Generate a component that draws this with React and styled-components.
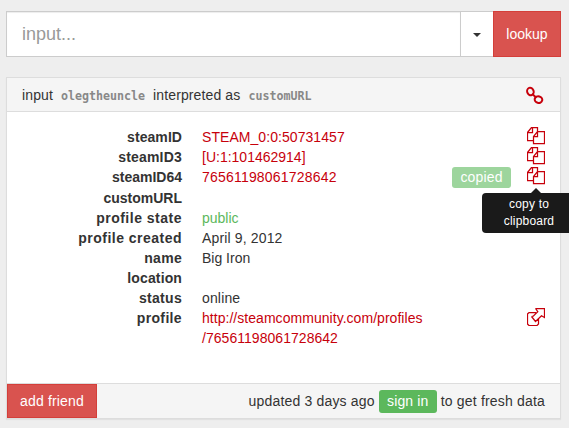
import React from "react";
import styled, { createGlobalStyle } from "styled-components";

const Global = createGlobalStyle`
  * { box-sizing: border-box; }
  html, body { margin: 0; height: 100%; overflow: hidden; background: #eeeeee; }
  body { font: 14px/20px "Liberation Sans", Arial, sans-serif; color: #333; }
`;

const Page = styled.main`
  width: 569px;
  height: 428px;
  padding: 11px 8px 0 6px;
  overflow: hidden;
`;

const SearchBar = styled.form`
  display: flex;
  height: 46px;
  margin: 0 0 20px;
`;

const SearchInput = styled.input`
  width: 455px;
  height: 46px;
  padding: 10px 15px;
  border: 1px solid #ccc;
  border-radius: 0;
  background: #fff;
  box-shadow: inset 0 1px 1px rgba(0, 0, 0, 0.075);
  font: 18px/24px "Liberation Sans", Arial, sans-serif;
  outline: none;
  &::placeholder { color: #999; opacity: 1; }
`;

const MenuButton = styled.button`
  display: flex;
  align-items: center;
  justify-content: center;
  width: 32px;
  padding: 2px 0 0;
  border: 1px solid #ccc;
  border-width: 1px 0;
  background: #fff;
`;

const Caret = styled.span`
  border: 4px solid transparent;
  border-top-color: #333;
  border-bottom: 0;
`;

const RedButton = styled.button`
  width: ${(p) => p.$width}px;
  height: ${(p) => p.$height}px;
  padding: 0;
  border: 1px solid #d43f3a;
  background: #d9534f;
  color: #fff;
  font: 14px/20px "Liberation Sans", Arial, sans-serif;
  letter-spacing: ${(p) => p.$spacing || 0}px;
`;

const Panel = styled.section`
  height: 342px;
  border: 1px solid #ddd;
  background: #fff;
  box-shadow: 0 1px 1px rgba(0, 0, 0, 0.05);
`;

const PanelHeader = styled.header`
  display: flex;
  align-items: center;
  justify-content: space-between;
  height: 34px;
  padding: 1px 16px 0 15px;
  border-bottom: 1px solid #ddd;
  background: #f5f5f5;
`;

const Heading = styled.span`
  padding-top: 1px;
  letter-spacing: 0.12px;
`;

const Code = styled.code`
  margin: 0 4px 0 4px;
  font: bold 11.65px/20px "DejaVu Sans Mono", monospace;
  letter-spacing: 0;
  color: #888;
`;

const Details = styled.dl`
  height: 271px;
  margin: 0;
  padding: 15.3px 15px 0 0;
`;

const Row = styled.div`
  display: grid;
  grid-template-columns: 175px 1fr auto;
  column-gap: 20px;
  min-height: 20.08px;
  line-height: 20.08px;
`;

const Label = styled.dt`
  font-weight: bold;
  text-align: right;
  letter-spacing: ${(p) => p.$spacing || 0}px;
`;

const Value = styled.dd`
  margin: 0;
  color: ${(p) => p.$color || "#333"};
  letter-spacing: ${(p) => p.$spacing || 0}px;
`;

const Actions = styled.div`
  display: flex;
  align-items: flex-start;
  gap: 16px;
  position: relative;
  height: 20px;
`;

const Badge = styled.span`
  width: ${(p) => p.$width}px;
  height: ${(p) => p.$height}px;
  text-align: center;
  border-radius: 3px;
  background: ${(p) => (p.$faded ? "#9dd59d" : "#5cb85c")};
  color: #fff;
  line-height: ${(p) => p.$height - 1}px;
  letter-spacing: 0.15px;
`;

const Tooltip = styled.div`
  position: absolute;
  z-index: 1;
  top: 26px;
  right: -31px;
  width: 94px;
  height: 40px;
  padding: 3px 8px;
  border-radius: 4px;
  background: #1a1a1a;
  color: #fff;
  font-size: 12px;
  line-height: 17px;
  letter-spacing: 0.2px;
  text-align: center;
  &::before {
    content: "";
    position: absolute;
    top: -5px;
    left: 49px;
    border: 5px solid transparent;
    border-top: 0;
    border-bottom-color: #1a1a1a;
  }
`;

const Icon = styled.svg`
  display: block;
  width: 18px;
  height: 18px;
  fill: none;
  stroke: #c7000b;
`;

const Footer = styled.footer`
  display: flex;
  justify-content: space-between;
  height: 35px;
  border-top: 1px solid #ddd;
  background: #f5f5f5;
`;

const Freshness = styled.div`
  display: flex;
  align-items: center;
  gap: 4px;
  height: 34px;
  padding-right: 15px;
  letter-spacing: 0.18px;
`;

const CopyIcon = () => (
  <Icon viewBox="0 0 18 18" strokeWidth="1.25">
    <path d="M6.5 13.5H.5V5.5L4.5.5H10.5V4.5M5.5.5V5.5H.5M10.5 4.5H17.5V16.5H6.5V9.5L10.5 4.5V9.5H6.5" />
  </Icon>
);

const LinkIcon = () => (
  <Icon viewBox="0 0 18 18" strokeWidth="2">
    <ellipse cx="4.4" cy="5.5" rx="3.2" ry="3.8" transform="rotate(-20 4.4 5.5)" />
    <ellipse cx="12.5" cy="13.6" rx="3.8" ry="3.3" transform="rotate(15 12.5 13.6)" />
    <path d="m6 7.8 4.4 3.9" />
  </Icon>
);

const ShareIcon = () => (
  <Icon viewBox="0 0 18 18" strokeWidth="1.25">
    <path d="M8.5.5H17.5V9.5L14.5 7.8L8.5 13.5L4.5 8.5M4.5 8.5L6.2 8.2L10.8 3.7L8.5.5M9 4.5H2L.5 6V16L2 17.5H10L11.5 16V11" />
  </Icon>
);

const rows = [
  { label: "steamID", spacing: 0.06, value: "STEAM_0:0:50731457", valueSpacing: 0.06, color: "#c7000b", copy: true },
  { label: "steamID3", spacing: 0.2, value: "[U:1:101462914]", color: "#c7000b", copy: true },
  { label: "steamID64", value: "76561198061728642", valueSpacing: 0.2, color: "#c7000b", copy: true, copied: true },
  { label: "customURL" },
  { label: "profile state", spacing: 0.5, value: "public", color: "#5cb85c" },
  { label: "profile created", spacing: 0.48, value: "April 9, 2012", valueSpacing: 0.15 },
  { label: "name", spacing: 0.3, value: "Big Iron" },
  { label: "location", spacing: 0.12 },
  { label: "status", spacing: 0.3, value: "online", valueSpacing: 0.15 },
  {
    label: "profile",
    spacing: 0.35,
    value: <>http://steamcommunity.com/profiles<br />/76561198061728642</>,
    valueSpacing: 0.04,
    color: "#c7000b",
    share: true,
  },
];

export default function App() {
  return (
    <>
      <Global />
      <Page>
        <SearchBar>
          <SearchInput placeholder="input..." />
          <MenuButton type="button" aria-label="options"><Caret /></MenuButton>
          <RedButton type="button" $width={68} $height={46}>lookup</RedButton>
        </SearchBar>
        <Panel>
          <PanelHeader>
            <Heading>input <Code>olegtheuncle</Code> interpreted as <Code>customURL</Code></Heading>
            <LinkIcon />
          </PanelHeader>
          <Details>
            {rows.map((row) => (
              <Row key={row.label}>
                <Label $spacing={row.spacing}>{row.label}</Label>
                <Value $color={row.color} $spacing={row.valueSpacing}>{row.value}</Value>
                <Actions>
                  {row.copied && <Badge $width={59} $height={21} $faded>copied</Badge>}
                  {row.copy && <CopyIcon />}
                  {row.share && <ShareIcon />}
                  {row.copied && <Tooltip role="tooltip">copy to<br />clipboard</Tooltip>}
                </Actions>
              </Row>
            ))}
          </Details>
          <Footer>
            <RedButton type="button" $width={90} $height={34} $spacing={0.15}>add friend</RedButton>
            <Freshness>
              <span>updated 3 days ago</span>
              <Badge $width={58} $height={23}>sign in</Badge>
              <span>to get fresh data</span>
            </Freshness>
          </Footer>
        </Panel>
      </Page>
    </>
  );
}
